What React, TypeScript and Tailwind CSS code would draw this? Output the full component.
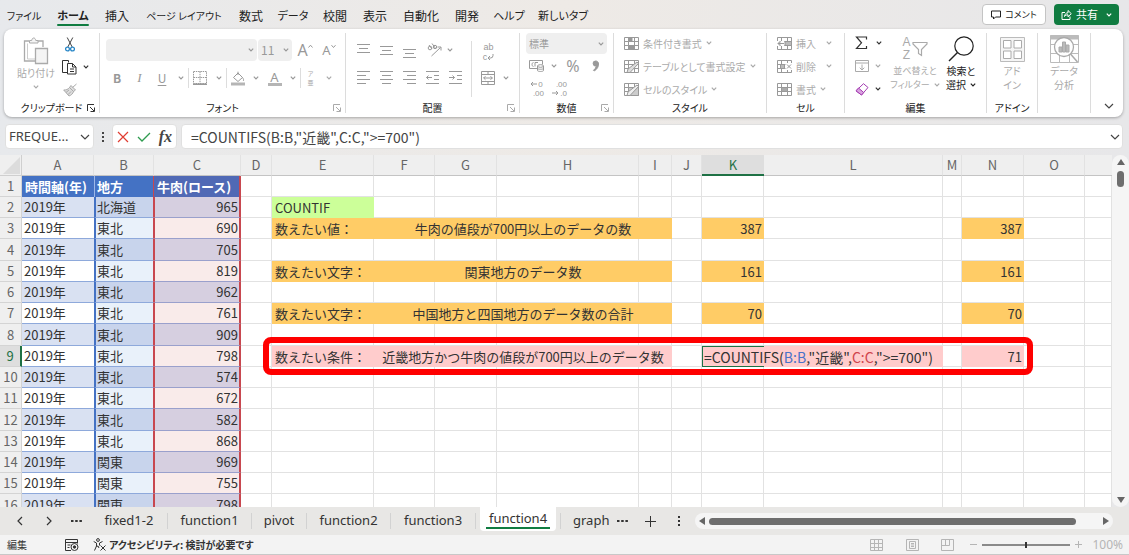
import React, { useState } from "react";

interface IconProps {
  w: number;
  h: number;
  className?: string;
  children: React.ReactNode;
}

const Icon: React.FC<IconProps> = ({ w, h, className = "", children }) => (
  <svg
    width={w}
    height={h}
    viewBox={`0 0 ${w} ${h}`}
    fill="none"
    stroke="currentColor"
    strokeWidth={1}
    aria-hidden="true"
    className={`shrink-0 ${className}`}
  >
    {children}
  </svg>
);

const Chevron: React.FC<{ className?: string }> = ({ className = "" }) => (
  <Icon w={6} h={4} className={className}>
    <path d="M.8 .7 3 3 5.2 .7" strokeWidth={1.2} />
  </Icon>
);

const BigChevron: React.FC = () => (
  <Icon w={10} h={6} className="text-[#444]">
    <path d="M1 1 5 5 9 1" strokeWidth={1.2} />
  </Icon>
);

const Launcher: React.FC<{ className?: string }> = ({ className = "text-[#aaa]" }) => (
  <Icon w={8} h={8} className={className}>
    <path d="M.5 7V.5H7M3 3l4 4M7.5 3.5v4h-4" />
  </Icon>
);

interface ToolProps {
  label: string;
  className?: string;
  children?: React.ReactNode;
}

const Tool: React.FC<ToolProps> = ({ label, className = "", children }) => (
  <button
    type="button"
    aria-label={label}
    className={`flex shrink-0 items-center whitespace-nowrap ${className}`}
  >
    {children}
  </button>
);

interface GroupProps {
  title?: string;
  className: string;
  launcher?: React.ReactNode;
  children: React.ReactNode;
}

const Group: React.FC<GroupProps> = ({ title, className, launcher, children }) => (
  <section className={`flex shrink-0 pt-1 ${className}`}>
    <div className="flex min-w-0 flex-1 flex-col">
      <div className="min-h-0 flex-1">{children}</div>
      <div className="mb-px flex h-4 shrink-0 items-center text-[#222]">
        <span className="w-3" />
        <h2 className="flex-1 text-center text-[10px] leading-4 whitespace-nowrap">{title}</h2>
        <span className="w-3">{launcher}</span>
      </div>
    </div>
    <div className="mb-1 w-px bg-[#dcdcdc]" />
  </section>
);

const Lines: React.FC<{ rows: [number, number][] }> = ({ rows }) => (
  <Icon w={13} h={rows.length * 4 - 3}>
    {rows.map(([from, to], i) => (
      <path key={i} d={`M${from} ${i * 4 + 0.5}H${to}`} />
    ))}
  </Icon>
);

const GridIcon: React.FC<{ children?: React.ReactNode }> = ({ children }) => (
  <Icon w={15} h={13} className="text-[#999]">
    <path d="M.5 .5h14v12H.5zM.5 4.5h14M.5 8.5h14M4.5 .5v12M10.5 .5v12" />
    {children}
  </Icon>
);

const menuTabs = [
  { name: "ファイル", box: "w-[34px] text-[10px]" },
  { name: "ホーム", box: "w-[32px] text-[11px] font-bold" },
  { name: "挿入", box: "w-[24px] text-[12px]" },
  { name: "ページ レイアウト", box: "w-[78px] text-[10px]" },
  { name: "数式", box: "w-[24px] text-[12px]" },
  { name: "データ", box: "w-[28px] text-[11px]" },
  { name: "校閲", box: "w-[24px] text-[12px]" },
  { name: "表示", box: "w-[24px] text-[12px]" },
  { name: "自動化", box: "w-[36px] text-[12px]" },
  { name: "開発", box: "w-[24px] text-[12px]" },
  { name: "ヘルプ", box: "w-[28px] text-[11px]" },
  { name: "新しいタブ", box: "w-[48px] text-[11px]" },
];

const MenuBar: React.FC = () => (
  <header className="flex h-[29px] shrink-0 items-center justify-between pr-[10px] pl-[7px]">
    <nav className="flex h-full gap-4 text-[#222]">
      {menuTabs.map((tab) => (
        <button
          key={tab.name}
          type="button"
          className={`flex shrink-0 flex-col items-center pt-[7px] whitespace-nowrap ${tab.box}`}
        >
          <span className="leading-[17px]">{tab.name}</span>
          {tab.name === "ホーム" && <span className="h-[2px] w-full rounded bg-[#107c41]" />}
        </button>
      ))}
    </nav>
    <div className="flex gap-2">
      <button
        type="button"
        className="flex h-[21px] w-[64px] items-center justify-center gap-1 rounded border border-[#c4c4c4] bg-white text-[9px] whitespace-nowrap text-[#222]"
      >
        <Icon w={10} h={10}>
          <path d="M.5 1h9v6H4.500L2.500 9V7h-2z" />
        </Icon>
        コメント
      </button>
      <button
        type="button"
        className="flex h-[21px] w-[65px] items-center justify-center gap-1 rounded bg-[#107c41] text-[11px] whitespace-nowrap text-white"
      >
        <Icon w={11} h={11}>
          <path d="M4 3.500H1v7h8V7.500M3.500 7.500c.3-2.400 1.600-3.700 3.500-3.700V1.500L10.300 4.700 7 7.800V5.800c-1.600 0-2.700.500-3.500 1.700z" />
        </Icon>
        共有
        <Chevron className="ml-1" />
      </button>
    </div>
  </header>
);

const ClipboardGroup: React.FC = () => (
  <Group title="クリップボード" className="w-[96px]" launcher={<Launcher className="text-[#333]" />}>
    <div className="flex items-start gap-1 pl-[10px]">
      <Tool label="貼り付け" className="w-[44px] flex-col pt-1 text-[#aaa]">
        <Icon w={26} h={28}>
          <path d="M6 4H1.500v20H12M20 10V4h-5" strokeWidth={1.300} />
          <path d="M4.500 6.500V22H12" stroke="#ccc" />
          <path d="M6.500 6V3.500h2.200C9 1.800 9.700 1 10.700 1s1.800.8 2.100 2.500H15V6z" fill="#f4f4f4" />
          <path d="M12.500 11.500h12v15h-12z" fill="#f4f4f4" strokeWidth={1.300} />
        </Icon>
        <span className="text-[10px] leading-4">貼り付け</span>
        <Chevron className="mt-1" />
      </Tool>
      <div className="flex flex-col gap-[7px] pt-[3px]">
        <Tool label="切り取り" className="h-4 w-[16px] justify-center">
          <Icon w={10} h={15} className="text-[#444]">
            <path d="M2.200 .5 7.200 10M7.800 .5 2.800 10" />
            <circle cx="2.500" cy="12" r="1.900" stroke="#2b88c8" strokeWidth={1.300} />
            <circle cx="7.500" cy="12" r="1.900" stroke="#2b88c8" strokeWidth={1.300} />
          </Icon>
        </Tool>
        <Tool label="コピー" className="h-4 gap-[6px] text-[#333]">
          <Icon w={15} h={15}>
            <path d="M5 12.500H.500V.5h6v2M5.500 3.500h5l3.500 3.500v7H5.500zM10.500 3.500V7H14M8 9h4M8 11.500h4" />
          </Icon>
          <Chevron />
        </Tool>
        <Tool label="書式のコピー" className="h-4 w-[16px] justify-center text-[#aaa]">
          <Icon w={15} h={14}>
            <path d="m13.500 1-4 3.500M8 2.500l4.500 4.500-2 1.500-4-4zM6.500 4.500C5 6.500 3 7 .7 7L6 13c2-.5 4-2.500 4.500-4.500z" fill="#ddd" />
            <path d="M3 9.500 6 7M5 11.700 8 8.500" />
          </Icon>
        </Tool>
      </div>
    </div>
  </Group>
);

const FontGroup: React.FC = () => (
  <Group title="フォント" className="w-[246px]" launcher={<Launcher />}>
    <div className="flex items-center pt-[6px] pl-[6px] text-[#999]">
      <label className="mr-px flex h-[22px] w-[151px] items-center rounded bg-[#efefef] pr-[3px]">
        <select disabled aria-label="フォント名" className="min-w-0 flex-1 appearance-none" />
        <Chevron />
      </label>
      <label className="flex h-[22px] w-[34px] items-center rounded bg-[#efefef] pr-[3px] pl-[3px]">
        <select
          disabled
          aria-label="フォント サイズ"
          className="min-w-0 flex-1 appearance-none text-[12px] text-[#999]"
        >
          <option>11</option>
        </select>
        <Chevron />
      </label>
      <Tool label="拡大" className="w-[26px] justify-center font-['Noto_Sans'] text-[16px] leading-5">
        A
        <Icon w={5} h={12}>
          <path d="M.5 3.500 2.500 1.200 4.500 3.500" />
        </Icon>
      </Tool>
      <Tool label="縮小" className="w-[22px] justify-center font-['Noto_Sans'] text-[13px] leading-5">
        A
        <Icon w={5} h={12}>
          <path d="M.5 1.200 2.500 3.500 4.500 1.200" />
        </Icon>
      </Tool>
    </div>
    <div className="mt-[6px] flex h-[22px] items-center pl-[6px] text-[#999]">
      <Tool label="太字" className="w-[22px] justify-center text-[12px] font-bold">B</Tool>
      <Tool label="斜体" className="w-[23px] justify-center font-['Liberation_Serif'] text-[13px] italic">
        I
      </Tool>
      <Tool label="下線" className="w-[22px] justify-center text-[12px] underline underline-offset-2">U</Tool>
      <Tool label="下線の種類" className="w-[15px] justify-center">
        <Chevron />
      </Tool>
      <span className="h-5 w-px bg-[#ddd]" />
      <Tool label="罫線" className="w-[37px] justify-center gap-[9px]">
        <Icon w={14} h={14}>
          <path d="M.5 .5h13v12H.500zM7 .5v12M.5 6.500h13" strokeDasharray="1.500 .8" />
          <path d="M0 13.300h14" strokeWidth={1.400} />
        </Icon>
        <Chevron />
      </Tool>
      <span className="h-5 w-px bg-[#ddd]" />
      <Tool label="塗りつぶしの色" className="w-[36px] justify-center gap-[8px]">
        <Icon w={14} h={15}>
          <path d="M2.500 6.500 7 2l4.500 4.500L7 10.500zM7 4V.7M11.500 6.500c1 1.500 1.500 2.500.700 3.500" />
          <path d="M0 13h14" stroke="#b5b5b5" strokeWidth={3} />
        </Icon>
        <Chevron />
      </Tool>
      <Tool label="フォントの色" className="w-[37px] justify-center gap-[8px]">
        <span className="w-[14px] border-b-[3px] border-[#b5b5b5] text-center font-['Noto_Sans'] text-[13px] leading-[12px]">
          A
        </span>
        <Chevron />
      </Tool>
      <span className="h-5 w-px bg-[#ddd]" />
      <Tool label="ふりがな" className="w-[37px] justify-center gap-3 text-[#aaa]">
        <span className="flex flex-col text-[6px] leading-[9px]">
          <span>ア</span>
          <span>亜</span>
        </span>
        <Chevron />
      </Tool>
    </div>
  </Group>
);

const AlignGroup: React.FC = () => (
  <Group title="配置" className="w-[174px]" launcher={<Launcher />}>
    <div className="flex items-start pt-2 pl-[6px] text-[#999]">
      <div className="flex flex-col gap-[12px]">
        <div className="flex h-[18px]">
          <Tool label="上揃え" className="w-[23px] justify-center pb-1">
            <Lines rows={[[0, 13], [2, 11], [0, 13]]} />
          </Tool>
          <Tool label="上下中央揃え" className="w-[23px] justify-center">
            <Lines rows={[[0, 13], [2, 11], [0, 13]]} />
          </Tool>
          <Tool label="下揃え" className="w-[23px] justify-center pt-[6px]">
            <Lines rows={[[0, 13], [2, 11], [0, 13]]} />
          </Tool>
          <Tool label="方向" className="w-[38px] justify-center gap-[5px]">
            <Icon w={15} h={14}>
              <circle cx="3" cy="5" r="1.800" />
              <path d="m2 2 3 4M5 .5l4 5.500" />
              <circle cx="8" cy="4" r="1.700" />
              <path d="M4.500 13 13.500 4.500M10.500 4h3.500v3.500" />
            </Icon>
            <Chevron />
          </Tool>
        </div>
        <div className="flex">
          <Tool label="左揃え" className="w-[23px] justify-center">
            <Lines rows={[[0, 13], [0, 9], [0, 13], [0, 9]]} />
          </Tool>
          <Tool label="中央揃え" className="w-[23px] justify-center">
            <Lines rows={[[0, 13], [2, 11], [0, 13], [2, 11]]} />
          </Tool>
          <Tool label="右揃え" className="w-[23px] justify-center">
            <Lines rows={[[0, 13], [4, 13], [0, 13], [4, 13]]} />
          </Tool>
          <Tool label="インデントを減らす" className="w-[23px] justify-center">
            <Icon w={13} h={13}>
              <path d="M0 .5h13M8 4.500h5M8 8.500h5M0 12.500h13M.5 6.500H6M2.500 4.500l-2 2 2 2" />
            </Icon>
          </Tool>
          <Tool label="インデントを増やす" className="w-[23px] justify-center">
            <Icon w={13} h={13}>
              <path d="M0 .5h13M8 4.500h5M8 8.500h5M0 12.500h13M0 6.500h5.500M3.500 4.500l2 2-2 2" />
            </Icon>
          </Tool>
        </div>
      </div>
      <span className="ml-1 h-14 w-px bg-[#ddd]" />
      <div className="flex flex-col items-start gap-2 pl-[9px]">
        <Tool label="折り返して全体を表示する" className="h-[22px] w-[15px] justify-center">
          <span className="flex flex-col font-['Liberation_Sans'] text-[9px] leading-[10px]">
            <span>ab</span>
            <span className="flex">
              c
              <Icon w={7} h={10}>
                <path d="M6 2v1.500q0 2.500-2.500 2.500H1M3 4 1 6l2 2" />
              </Icon>
            </span>
          </span>
        </Tool>
        <Tool label="セルを結合して中央揃え" className="gap-2">
          <Icon w={14} h={14}>
            <path d="M.5 .5h13v13H.500zM.5 3.500h13M.5 10.500h13M7 .5v3M7 10.500v3M2.500 7h9M4.500 5.200 2.700 7l1.800 1.800M9.500 5.200 11.300 7 9.500 8.800" />
          </Icon>
          <Chevron />
        </Tool>
      </div>
    </div>
  </Group>
);

const NumberGroup: React.FC = () => (
  <Group title="数値" className="w-[94px]" launcher={<Launcher />}>
    <div className="flex flex-col pr-[6px] pl-[6px] text-[#999]">
      <label className="flex h-[21px] items-center rounded bg-[#efefef] pr-[3px] pl-[3px]">
        <select
          disabled
          aria-label="表示形式"
          className="min-w-0 flex-1 appearance-none text-[10px] text-[#999]"
        >
          <option>標準</option>
        </select>
        <Chevron />
      </label>
      <div className="flex h-[24px] items-center">
        <Tool label="通貨表示形式" className="w-[34px] justify-center gap-[7px]">
          <Icon w={15} h={12}>
            <path d="M8 8.500H.500V.5h13v4M4.500 2.500C2.500 2.500 2.500 6.500 4.500 6.500M6 6.500v-4h3" />
            <ellipse cx="11.500" cy="6" rx="3" ry="1.300" />
            <path d="M8.500 6v4.500c0 1.300 6 1.300 6 0V6M8.500 8.300c0 1.300 6 1.300 6 0" />
          </Icon>
          <Chevron />
        </Tool>
        <Tool label="パーセント スタイル" className="w-[26px] justify-center font-['Noto_Sans'] text-[16px] leading-5">
          %
        </Tool>
        <Tool label="桁区切りスタイル" className="w-[20px] justify-center">
          <Icon w={8} h={12}>
            <path d="M3.500 1a2.500 2.500 0 1 0 .8 4.900Q4 8.500 1.500 10.300l.7.700C5.500 9 6.500 6.500 6.500 4A2.800 2.800 0 0 0 3.500 1z" fill="currentColor" />
          </Icon>
        </Tool>
      </div>
      <div className="flex h-[22px] items-center gap-2 pl-[3px] font-['Liberation_Sans'] text-[8px] leading-[9px]">
        <Tool label="小数点以下の表示桁数を増やす" className="w-[15px] flex-col">
          <span className="flex">
            <Icon w={8} h={8}>
              <path d="M1 4h6M3 2 1 4l2 2" />
            </Icon>
            0
          </span>
          <span className="self-end">.00</span>
        </Tool>
        <Tool label="小数点以下の表示桁数を減らす" className="w-[15px] flex-col">
          <span className="self-end">.00</span>
          <span className="flex">
            <Icon w={8} h={8}>
              <path d="M0 4h6M4 2l2 2-2 2" />
            </Icon>
            .0
          </span>
        </Tool>
      </div>
    </div>
  </Group>
);

const StyleGroup: React.FC = () => (
  <Group title="スタイル" className="w-[153px]">
    <div className="flex flex-col items-start gap-[7px] pt-[2px] pl-[10px] text-[10px] text-[#aaa]">
      <Tool label="条件付き書式" className="h-4 gap-1">
        <GridIcon>
          <path d="M5 1h3v3.500H5zM5 8.500h5v3.500H5z" fill="currentColor" />
        </GridIcon>
        条件付き書式
        <Chevron />
      </Tool>
      <Tool label="テーブルとして書式設定" className="h-4 gap-1">
        <GridIcon>
          <path d="M14.500 3.500 6 12.500H3l1-3.500L13 2z" fill="#ddd" />
        </GridIcon>
        テーブルとして書式設定
        <Chevron />
      </Tool>
      <Tool label="セルのスタイル" className="h-4 gap-1">
        <GridIcon>
          <path d="M4.500 4.500h10v8h-10z" fill="#ccc" />
          <path d="M14.500 3.500 6 12.500H3l1-3.500L13 2z" fill="#eee" />
        </GridIcon>
        セルのスタイル
        <Chevron />
      </Tool>
    </div>
  </Group>
);

const CellGroup: React.FC = () => (
  <Group title="セル" className="w-[78px]">
    <div className="flex flex-col items-start gap-[7px] pt-[2px] pl-[10px] text-[10px] text-[#aaa]">
      <Tool label="挿入" className="h-4 gap-1">
        <GridIcon>
          <path d="M0 4.500h7v4H0z" fill="#fff" stroke="#fff" />
          <path d="M1 6.500h6M3.500 4 1 6.500 3.500 9M8 4.500h6.500v4H8z" fill="#bbb" />
        </GridIcon>
        挿入
        <Chevron className="ml-[6px]" />
      </Tool>
      <Tool label="削除" className="h-4 gap-1">
        <GridIcon>
          <path d="M9 3.500h6v6H9z" fill="#fff" stroke="#fff" />
          <path d="m10 4.500 4 4M14 4.500l-4 4M3.500 4.500h4v4h-4z" fill="#bbb" />
        </GridIcon>
        削除
        <Chevron className="ml-[6px]" />
      </Tool>
      <Tool label="書式" className="h-4 gap-1">
        <GridIcon>
          <path d="M4.500 4.500h6v4h-6z" fill="#aaa" />
        </GridIcon>
        書式
        <Chevron />
      </Tool>
    </div>
  </Group>
);

const EditGroup: React.FC = () => (
  <Group title="編集" className="w-[142px]">
    <div className="flex items-start pl-[10px]">
      <div className="flex w-[35px] flex-col items-start gap-[7px] pt-[2px]">
        <Tool label="オート SUM" className="h-4 gap-2 text-[#333]">
          <Icon w={13} h={14}>
            <path d="M11.500 3.500V1H1.500l5 5.800-5 5.700h10V10" strokeWidth={1.200} />
          </Icon>
          <Chevron />
        </Tool>
        <Tool label="フィル" className="h-4 gap-[6px] text-[#aaa]">
          <Icon w={14} h={12}>
            <path d="M.5 .5h13v11H.500zM.5 3h13M7 4.500v5.500M4.700 7.700 7 10l2.300-2.300" />
          </Icon>
          <Chevron />
        </Tool>
        <Tool label="クリア" className="h-4 gap-[6px]">
          <Icon w={14} h={13} className="text-[#a33bb0]">
            <path d="M8.500 .700 13 4.500 6.500 12 1 7.800z" />
            <path d="M1 7.800 3.500 5l5.200 4.500L6.500 12z" fill="#d9a3df" />
          </Icon>
          <Chevron className="text-[#333]" />
        </Tool>
      </div>
      <Tool label="並べ替えとフィルター" className="w-[50px] flex-col pt-[3px] text-[#aaa]">
        <span className="flex h-[26px] items-center gap-px">
          <span className="flex w-[9px] flex-col font-['Liberation_Sans'] text-[12px] leading-[13px]">
            <span>A</span>
            <span>Z</span>
          </span>
          <Icon w={16} h={16}>
            <path d="M1 1.500h14v1.500L9.500 8.500v6l-3-2v-4L1 3z" strokeWidth={1.200} />
          </Icon>
        </span>
        <span className="mt-[2px] text-[9px] leading-[14px]">並べ替えと</span>
        <span className="flex items-center gap-1 text-[9px] leading-[14px]">
          フィルター
          <Chevron />
        </span>
      </Tool>
      <Tool label="検索と選択" className="w-[42px] flex-col pt-[3px] text-[#222]">
        <Icon w={26} h={26}>
          <circle cx="16" cy="10" r="9.200" strokeWidth={1.200} />
          <path d="M9.500 16.500 1 25" strokeWidth={1.400} />
        </Icon>
        <span className="mt-[2px] text-[10px] leading-[14px]">検索と</span>
        <span className="flex items-center gap-1 text-[10px] leading-[14px]">
          選択
          <Chevron />
        </span>
      </Tool>
    </div>
  </Group>
);

const AddinGroups: React.FC = () => (
  <>
    <Group title="アドイン" className="w-[51px]">
      <Tool label="アドイン" className="w-full flex-col pt-[4px] text-[10px] leading-[14px] text-[#aaa]">
        <Icon w={25} h={25}>
          <path d="M.5 .5h24v24H.500z" stroke="#bbb" fill="#f5f5f5" />
          <path d="M3.500 3.500h7.500v7.500H3.500zM14 3.500h7.500v7.500H14zM3.500 14h7.500v7.500H3.500zM14 14h7.500v7.500H14z" fill="#fff" />
        </Icon>
        <span className="mt-[2px]">アド</span>
        <span>イン</span>
      </Tool>
    </Group>
    <Group className="w-[53px]">
      <Tool label="データ分析" className="w-full flex-col pt-[2px] text-[10px] leading-[14px] text-[#aaa]">
        <Icon w={29} h={28}>
          <path d="M.5 .5h28v27H.500zM.5 9.500h28M.5 18.500h28M9.500 19v8M19.500 19v8" stroke="#bbb" />
          <path d="M0 2.500h29" strokeWidth={4} stroke="#bbb" />
          <circle cx="14" cy="12" r="9.500" fill="#fff" strokeWidth={1.300} />
          <path d="M9 12h3v5H9zM12.500 7h3v10h-3zM16 10h3v7h-3z" fill="#bbb" />
          <path d="m20.500 19 7 8" strokeWidth={1.500} />
        </Icon>
        <span className="mt-px">データ</span>
        <span>分析</span>
      </Tool>
    </Group>
  </>
);

const Ribbon: React.FC = () => (
  <div className="mr-[6px] ml-1 flex h-[88px] shrink-0 overflow-hidden rounded-lg bg-white shadow-[0_1px_3px_rgba(0,0,0,0.3)]">
    <ClipboardGroup />
    <FontGroup />
    <AlignGroup />
    <NumberGroup />
    <StyleGroup />
    <CellGroup />
    <EditGroup />
    <AddinGroups />
    <div className="flex flex-1 items-end justify-center pb-2">
      <Tool label="リボンの表示オプション" className="ml-1 justify-center">
        <BigChevron />
      </Tool>
    </div>
  </div>
);

const FormulaBar: React.FC = () => {
  const [formula, setFormula] = useState('=COUNTIFS(B:B,"近畿",C:C,">=700")');

  return (
    <div className="mt-[7px] mr-[6px] ml-[5px] flex h-[25px] shrink-0 items-stretch text-[#444]">
      <div className="flex w-[89px] items-center rounded border border-[#e0e0e0] bg-white pr-[3px] pl-[3px]">
        <input
          aria-label="名前ボックス"
          defaultValue="FREQUE..."
          className="min-w-0 flex-1 font-['Noto_Sans'] text-[13px] outline-none"
        />
        <BigChevron />
      </div>
      <div className="flex w-[18px] items-center justify-center">
        <Icon w={2} h={10}>
          <path d="M1 0v10" strokeWidth={2} strokeDasharray="2 2" />
        </Icon>
      </div>
      <div className="mr-1 flex w-[65px] items-center justify-around rounded border border-[#e0e0e0] bg-white">
        <Tool label="キャンセル">
          <Icon w={12} h={12} className="text-[#e03c31]">
            <path d="m1 1 10 10M11 1 1 11" strokeWidth={1.200} />
          </Icon>
        </Tool>
        <Tool label="入力">
          <Icon w={14} h={10} className="text-[#2e9b4f]">
            <path d="m1 5 4 4 8-8" strokeWidth={1.300} />
          </Icon>
        </Tool>
        <Tool label="関数の挿入" className="font-['Liberation_Serif'] text-[16px] leading-5 font-bold italic">
          fx
        </Tool>
      </div>
      <div className="flex flex-1 items-center rounded border border-[#e0e0e0] bg-white pr-[2px] pl-[9px]">
        <input
          aria-label="数式バー"
          value={formula}
          onChange={(e) => setFormula(e.target.value)}
          className="min-w-0 flex-1 text-[14px] leading-5 outline-none [font-feature-settings:normal]"
        />
        <BigChevron />
      </div>
    </div>
  );
};

const columns = [
  { name: "A", width: "w-[72px]" },
  { name: "B", width: "w-[60px]" },
  { name: "C", width: "w-[87px]" },
  { name: "D", width: "w-[31px]" },
  { name: "E", width: "w-[102px]" },
  { name: "F", width: "w-[61px]" },
  { name: "G", width: "w-[62px]" },
  { name: "H", width: "w-[142px]" },
  { name: "I", width: "w-[33px]" },
  { name: "J", width: "w-[30px]" },
  { name: "K", width: "w-[62px]" },
  { name: "L", width: "w-[179px]" },
  { name: "M", width: "w-[19px]" },
  { name: "N", width: "w-[62px]" },
  { name: "O", width: "w-[61px]" },
];

const regionData: [string, number][] = [
  ["北海道", 965],
  ["東北", 690],
  ["東北", 705],
  ["東北", 819],
  ["東北", 962],
  ["東北", 761],
  ["東北", 909],
  ["東北", 798],
  ["東北", 574],
  ["東北", 672],
  ["東北", 582],
  ["東北", 868],
  ["関東", 969],
  ["関東", 755],
  ["関東", 798],
];

const questions: Record<number, { label: string; text: string; count: number }> = {
  3: { label: "数えたい値：", text: "牛肉の値段が700円以上のデータの数", count: 387 },
  5: { label: "数えたい文字：", text: "関東地方のデータ数", count: 161 },
  7: { label: "数えたい文字：", text: "中国地方と四国地方のデータ数の合計", count: 70 },
  9: { label: "数えたい条件：", text: "近畿地方かつ牛肉の値段が700円以上のデータ数", count: 71 },
};

const line = "border-r border-b border-[#e2e2e2]";

const Blank: React.FC<{ count: number }> = ({ count }) => (
  <>
    {Array.from({ length: count }, (_, i) => (
      <td key={i} className={line} />
    ))}
  </>
);

const RightCells: React.FC<{ row: number }> = ({ row }) => {
  const q = questions[row];
  if (!q) {
    return (
      <>
        {row === 2 ? (
          <td className="bg-[#ccff99] pl-[3px]">COUNTIF</td>
        ) : (
          <td className={line} />
        )}
        <Blank count={11} />
      </>
    );
  }

  const active = row === 9;
  const fill = active ? "bg-[#ffcccc]" : "bg-[#ffcc66]";
  return (
    <>
      <td className={`pl-[3px] ${fill}`}>{q.label}</td>
      <td colSpan={4} className={`text-center ${fill}`}>
        {q.text}
      </td>
      <Blank count={1} />
      {active ? (
        <>
          <td className={`border border-r-0 border-[#1e7145] pl-px text-[14px] ${fill}`}>
            =COUNTIFS(<span className="text-[#4a72c8]">B:B</span>,"近畿",
            <span className="text-[#d0444c]">C:C</span>,"&gt;=700")
          </td>
          <td className={fill} />
        </>
      ) : (
        <>
          <td className={`pr-[2px] text-right ${fill}`}>{q.count}</td>
          <td className={line} />
        </>
      )}
      <Blank count={1} />
      <td className={`pr-[2px] text-right ${fill}`}>{q.count}</td>
      <Blank count={2} />
    </>
  );
};

const Sheet: React.FC = () => (
  <div className="relative min-w-0 flex-1 overflow-hidden bg-white">
    <table className="w-full table-fixed border-separate border-spacing-0 text-[13px] leading-[18px] whitespace-nowrap text-[#333]">
      <colgroup>
        <col className="w-[22px]" />
        {columns.map((col) => (
          <col key={col.name} className={col.width} />
        ))}
        <col />
      </colgroup>
      <thead>
        <tr className="h-[21px] bg-[#efefef] text-[#666]">
          <th className="border-r border-b border-[#cfcfcf]" aria-label="すべて選択">
            <Icon w={17} h={17} className="ml-[3px]">
              <path d="M17 0v17H0z" fill="#dcdcdc" stroke="none" />
            </Icon>
          </th>
          {columns.map((col) => (
            <th
              key={col.name}
              className={
                col.name === "K"
                  ? "border-b-2 border-[#1e7145] bg-[#dedede] pt-px font-normal text-[#1e7145]"
                  : "border-r border-b border-r-[#e2e2e2] border-b-[#c4c4c4] font-normal"
              }
            >
              {col.name}
            </th>
          ))}
          <th className="border-b border-[#c4c4c4]" />
        </tr>
      </thead>
      <tbody>
        <tr className="h-[21px]">
          <th className="border-r border-b border-[#d4d4d4] bg-[#efefef] font-normal text-[#666]">1</th>
          <td className="bg-[#4472c4] pl-[3px] font-bold text-white">時間軸(年)</td>
          <td className="border-r border-l border-r-[#c8474f] border-l-[#9db8e8] bg-[#4472c4] pl-[2px] font-bold text-white">
            地方
          </td>
          <td className="border-r-2 border-[#c8474f] bg-[#5069b5] pl-[3px] font-bold text-white">
            牛肉(ロース)
          </td>
          <Blank count={13} />
        </tr>
        {regionData.map(([region, price], i) => {
          const row = i + 2;
          const shaded = row % 2 === 0;
          return (
            <tr key={row} className={row % 4 === 0 ? "h-[22px]" : "h-[21px]"}>
              <th
                className={
                  row === 9
                    ? "border-r-2 border-b border-r-[#1e7145] border-b-[#d4d4d4] bg-[#dedede] font-normal text-[#1e7145]"
                    : "border-r border-b border-[#d4d4d4] bg-[#efefef] font-normal text-[#666]"
                }
              >
                {row}
              </th>
              <td className={`border-b border-[#8ea9db] pl-[2px] ${shaded ? "bg-[#d9e1f2]" : "bg-white"}`}>
                2019年
              </td>
              <td
                className={`border-r border-b border-l-2 border-r-[#c8474f] border-b-[#8ea9db] border-l-[#4472c4] pl-px ${
                  shaded ? "bg-[#c8d4ec]" : "bg-[#e9f1fa]"
                }`}
              >
                {region}
              </td>
              <td
                className={`border-r-2 border-b border-l border-r-[#c8474f] border-b-[#9aa0cc] border-l-[#c8474f] pr-px text-right ${
                  shaded ? "bg-[#d6cfe0]" : "bg-[#f9ebea]"
                }`}
              >
                {price}
              </td>
              <Blank count={1} />
              <RightCells row={row} />
            </tr>
          );
        })}
      </tbody>
    </table>
    {/* callout around row 9 */}
    <div className="pointer-events-none absolute top-[182px] left-[263px] h-[38px] w-[770px] rounded-lg border-6 border-[#ff0000]" />
  </div>
);

const VerticalScroll: React.FC = () => (
  <div className="flex w-[17px] shrink-0 flex-col items-center rounded-full bg-[#f5f5f5] py-1 text-[#666]">
    <Icon w={8} h={6}>
      <path d="M4 0 8 6H0z" fill="currentColor" stroke="none" />
    </Icon>
    <span className="mt-[6px] h-4 w-[7px] rounded-full bg-[#6e6e6e]" />
    <span className="flex-1" />
    <Icon w={8} h={6}>
      <path d="M0 0h8L4 6z" fill="currentColor" stroke="none" />
    </Icon>
  </div>
);

const sheetTabs = [
  { name: "fixed1-2", width: "w-[77px]" },
  { name: "function1", width: "w-[84px]" },
  { name: "pivot", width: "w-[55px]" },
  { name: "function2", width: "w-[84px]" },
  { name: "function3", width: "w-[85px]" },
  { name: "function4", width: "w-[84px]" },
  { name: "graph", width: "w-[50px]" },
];

const Dots: React.FC = () => (
  <Icon w={11} h={2} className="text-[#333]">
    <path d="M0 1h11" strokeWidth={2} strokeDasharray="2.500 1.700" />
  </Icon>
);

const SheetBar: React.FC = () => {
  const [current, setCurrent] = useState("function4");

  return (
    <div className="flex h-7 shrink-0 items-center bg-[#e8e7e5] pr-4 text-[#333]">
      <Tool label="前のシート" className="w-[40px] justify-center">
        <Icon w={6} h={10}>
          <path d="M5 1 1 5l4 4" strokeWidth={1.200} />
        </Icon>
      </Tool>
      <Tool label="次のシート" className="w-[18px] justify-center">
        <Icon w={6} h={10}>
          <path d="m1 1 4 4-4 4" strokeWidth={1.200} />
        </Icon>
      </Tool>
      <Tool label="シート一覧" className="w-[33px] justify-center pl-1">
        <Dots />
      </Tool>
      <div className="flex h-full font-['Noto_Sans'] text-[13px]">
        {sheetTabs.map((tab) =>
          tab.name === current ? (
            <div key={tab.name} className={`px-1 pb-1 ${tab.width}`}>
              <button
                type="button"
                className="flex h-full w-full flex-col items-center rounded-b bg-white pt-[2px]"
              >
                <span className="border-b-2 border-[#107c41] px-[3px] leading-[18px]">{tab.name}</span>
              </button>
            </div>
          ) : (
            <button
              key={tab.name}
              type="button"
              onClick={() => setCurrent(tab.name)}
              className={`flex items-center justify-center ${tab.width}`}
            >
              {tab.name === "graph" && <span className="h-4 w-px bg-[#d2d2d2]" />}
              <span className={tab.name === "graph" ? "flex-1 pl-3 text-left" : "flex-1"}>{tab.name}</span>
              {tab.name !== "graph" && <span className="h-4 w-px bg-[#d2d2d2]" />}
            </button>
          )
        )}
      </div>
      <Tool label="その他のシート" className="w-[24px] justify-center">
        <Dots />
      </Tool>
      <Tool label="新しいシート" className="w-[32px] justify-center">
        <Icon w={11} h={11}>
          <path d="M5.500 0v11M0 5.500h11" />
        </Icon>
      </Tool>
      <div className="flex w-[25px] items-center justify-center">
        <Icon w={2} h={10}>
          <path d="M1 0v10" strokeWidth={2} strokeDasharray="2 2" />
        </Icon>
      </div>
      <div className="ml-1 flex h-4 flex-1 items-center rounded-full bg-[#f5f5f5] px-1 text-[#666]">
        <Icon w={6} h={8}>
          <path d="M6 0v8L0 4z" fill="currentColor" stroke="none" />
        </Icon>
        <div className="flex flex-1 pr-[27px] pl-[4px]">
          <span className="h-[7px] flex-1 rounded-full bg-[#6e6e6e]" />
        </div>
        <Icon w={6} h={8}>
          <path d="M0 0v8l6-4z" fill="currentColor" stroke="none" />
        </Icon>
      </div>
    </div>
  );
};

const StatusBar: React.FC = () => (
  <footer className="flex h-5 shrink-0 items-center justify-between border-b border-[#c8c8c8] bg-[#f3f3f3] pr-[6px] pl-[7px]">
    <div className="flex items-center whitespace-nowrap text-[#333]">
      <span className="w-[58px] text-[10px]">編集</span>
      <Icon w={14} h={12}>
        <path d="M6 11.500H.500V.5h12v4M.5 3.500h12M2.500 6h3M2.500 8.500h2" />
        <circle cx="9.500" cy="8" r="3.500" />
        <circle cx="9.500" cy="8" r="1.200" fill="currentColor" />
      </Icon>
      <button type="button" className="ml-[14px] flex items-center gap-[3px] text-[10px] font-bold">
        <Icon w={13} h={13}>
          <circle cx="5" cy="2" r="1.400" />
          <path d="M.7 3.500 3.500 5v3L1.500 12.500M9.500 3.500 6.500 5v2.500M3.500 8.500 5 8l1 2M7.500 7.500l5 5M12.500 7.500l-5 5" />
        </Icon>
        アクセシビリティ: 検討が必要です
      </button>
    </div>
    <div className="flex items-center text-[#b5b5b5]">
      <Tool label="標準" className="w-[35px] justify-center">
        <Icon w={13} h={12}>
          <path d="M.5 .5h12v11H.500zM4.500 .5v11M8.500 .5v11M.5 4.500h12M.5 8.500h12" />
        </Icon>
      </Tool>
      <Tool label="ページ レイアウト" className="w-[36px] justify-center">
        <Icon w={13} h={12}>
          <path d="M.5 .5h12v11H.500zM3.500 2.500h6v7h-6zM5 4.500h3M5 6h3M5 7.500h3" />
        </Icon>
      </Tool>
      <Tool label="改ページ プレビュー" className="w-[35px] justify-center">
        <Icon w={13} h={12}>
          <path d="M.5 .5h12v11H.500zM4.500 .5v6M8.500 .5v6M.5 6.500h8" />
        </Icon>
      </Tool>
      <Tool label="縮小" className="w-[17px] justify-center">
        <Icon w={7} h={7}>
          <path d="M0 3.500h7" />
        </Icon>
      </Tool>
      <input
        type="range"
        aria-label="ズーム"
        min={0}
        max={200}
        defaultValue={100}
        className="h-[2px] w-[88px] appearance-none bg-[#8a8a8a] [&::-webkit-slider-thumb]:h-[6px] [&::-webkit-slider-thumb]:w-[2px] [&::-webkit-slider-thumb]:appearance-none [&::-webkit-slider-thumb]:bg-[#333]"
      />
      <Tool label="拡大" className="w-[17px] justify-center">
        <Icon w={7} h={7}>
          <path d="M0 3.500h7M3.500 0v7" />
        </Icon>
      </Tool>
      <span className="w-[36px] text-right font-['Noto_Sans'] text-[12px] leading-4">100%</span>
    </div>
  </footer>
);

const App: React.FC = () => {
  return (
    <div className="flex h-screen flex-col overflow-hidden bg-linear-to-r from-[#e7e9ec] via-[#eeeae6] to-[#e7e7e9] font-['Noto_Sans_CJK_JP',sans-serif] [font-feature-settings:'palt']">
      <MenuBar />
      <Ribbon />
      <FormulaBar />
      <main className="mt-[6px] flex min-h-0 flex-1 [font-feature-settings:normal]">
        <Sheet />
        <VerticalScroll />
      </main>
      <SheetBar />
      <StatusBar />
    </div>
  );
};

export default App;
